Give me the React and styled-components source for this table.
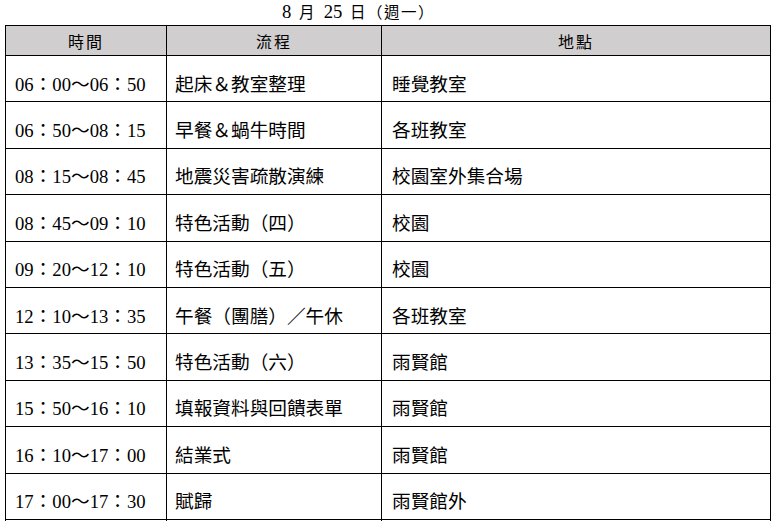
import React from "react";
import styled, { createGlobalStyle } from "styled-components";

const GlobalStyle = createGlobalStyle`
  html, body {
    margin: 0;
    padding: 0;
    background: #fff;
    overflow: hidden;
  }
  body {
    font-family: "Liberation Serif", "Noto Sans CJK TC", serif;
    color: #000;
  }
`;

const Page = styled.div`
  width: 776px;
  height: 521px;
  padding: 2px 6px 0 5px;
  box-sizing: border-box;
`;

const Title = styled.div`
  height: 23px;
  line-height: 20px;
  font-size: 18.67px;
  text-align: center;
  padding-right: 58px;
  white-space: pre;
  word-spacing: 3px;
`;

const Small = styled.span`
  font-size: 15.5px;
  letter-spacing: 1.5px;
`;

const Table = styled.table`
  width: 765px;
  border-collapse: collapse;
  table-layout: fixed;
`;

const HeadCell = styled.th`
  height: 29px;
  padding: 0;
  background: #d0cece;
  border: 1px solid #000;
  font-weight: normal;
  font-size: 16px;
  letter-spacing: 2px;
  text-align: center;
  vertical-align: middle;
`;

const Row = styled.tr`
  height: 46.4px;
`;

const Cell = styled.td`
  border: 1px solid #000;
  padding: 12px 0 0 ${(p) => p.$pad}px;
  font-size: 18.67px;
  line-height: 24px;
  vertical-align: middle;
  white-space: nowrap;
  overflow: hidden;
`;

const rows = [
  ["06：00～06：50", "起床＆教室整理", "睡覺教室"],
  ["06：50～08：15", "早餐＆蝸牛時間", "各班教室"],
  ["08：15～08：45", "地震災害疏散演練", "校園室外集合場"],
  ["08：45～09：10", "特色活動（四）", "校園"],
  ["09：20～12：10", "特色活動（五）", "校園"],
  ["12：10～13：35", "午餐（團膳）／午休", "各班教室"],
  ["13：35～15：50", "特色活動（六）", "雨賢館"],
  ["15：50～16：10", "填報資料與回饋表單", "雨賢館"],
  ["16：10～17：00", "結業式", "雨賢館"],
  ["17：00～17：30", "賦歸", "雨賢館外"],
  ["", "", ""],
];

export default function App() {
  return (
    <>
      <GlobalStyle />
      <Page>
        <Title>
          8 <Small>月</Small> 25 <Small>日（週一）</Small>
        </Title>
        <Table>
          <colgroup>
            <col style={{ width: 161 }} />
            <col style={{ width: 215 }} />
            <col style={{ width: 389 }} />
          </colgroup>
          <thead>
            <tr>
              <HeadCell>時間</HeadCell>
              <HeadCell>流程</HeadCell>
              <HeadCell>地點</HeadCell>
            </tr>
          </thead>
          <tbody>
            {rows.map((r, i) => (
              <Row key={i}>
                <Cell $pad={9}>{r[0]}</Cell>
                <Cell $pad={8}>{r[1]}</Cell>
                <Cell $pad={10}>{r[2]}</Cell>
              </Row>
            ))}
          </tbody>
        </Table>
      </Page>
    </>
  );
}
